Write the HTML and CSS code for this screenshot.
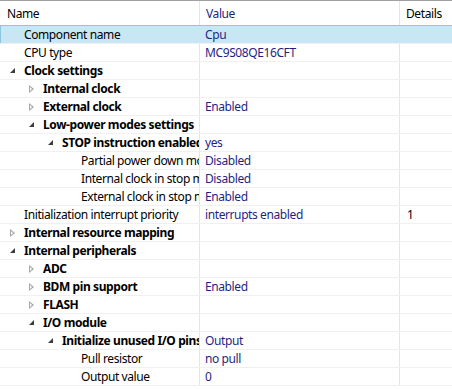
FILE: index.html
```html
<!DOCTYPE html>
<html lang="en">
<head>
    <meta charset="UTF-8">
    <title>Component Inspector</title>
    <link rel="stylesheet" href="styles.css">
</head>
<body>
    <div class="grid">
        <div class="row head">
            <div class="cell name">Name</div>
            <div class="cell value">Value</div>
            <div class="cell details">Details</div>
        </div>

        <div class="row selected">
            <div class="cell name l0"><span class="tog"></span><span class="txt">Component name</span></div>
            <div class="cell value">Cpu</div>
            <div class="cell details"></div>
        </div>
        <div class="row">
            <div class="cell name l0"><span class="tog"></span><span class="txt">CPU type</span></div>
            <div class="cell value">MC9S08QE16CFT</div>
            <div class="cell details"></div>
        </div>
        <div class="row">
            <div class="cell name l0 grp"><span class="tog open"></span><span class="txt">Clock settings</span></div>
            <div class="cell value"></div>
            <div class="cell details"></div>
        </div>
        <div class="row">
            <div class="cell name l1 grp"><span class="tog shut"></span><span class="txt">Internal clock</span></div>
            <div class="cell value"></div>
            <div class="cell details"></div>
        </div>
        <div class="row">
            <div class="cell name l1 grp"><span class="tog shut"></span><span class="txt">External clock</span></div>
            <div class="cell value">Enabled</div>
            <div class="cell details"></div>
        </div>
        <div class="row">
            <div class="cell name l1 grp"><span class="tog open"></span><span class="txt">Low-power modes settings</span></div>
            <div class="cell value"></div>
            <div class="cell details"></div>
        </div>
        <div class="row">
            <div class="cell name l2 grp"><span class="tog open"></span><span class="txt">STOP instruction enabled</span></div>
            <div class="cell value">yes</div>
            <div class="cell details"></div>
        </div>
        <div class="row">
            <div class="cell name l3"><span class="tog"></span><span class="txt">Partial power down mode</span></div>
            <div class="cell value">Disabled</div>
            <div class="cell details"></div>
        </div>
        <div class="row">
            <div class="cell name l3"><span class="tog"></span><span class="txt">Internal clock in stop mode</span></div>
            <div class="cell value">Disabled</div>
            <div class="cell details"></div>
        </div>
        <div class="row">
            <div class="cell name l3"><span class="tog"></span><span class="txt">External clock in stop mode</span></div>
            <div class="cell value">Enabled</div>
            <div class="cell details"></div>
        </div>
        <div class="row">
            <div class="cell name l0"><span class="tog"></span><span class="txt">Initialization interrupt priority</span></div>
            <div class="cell value">interrupts enabled</div>
            <div class="cell details">1</div>
        </div>
        <div class="row">
            <div class="cell name l0 grp"><span class="tog shut"></span><span class="txt">Internal resource mapping</span></div>
            <div class="cell value"></div>
            <div class="cell details"></div>
        </div>
        <div class="row">
            <div class="cell name l0 grp"><span class="tog open"></span><span class="txt">Internal peripherals</span></div>
            <div class="cell value"></div>
            <div class="cell details"></div>
        </div>
        <div class="row">
            <div class="cell name l1 grp"><span class="tog shut"></span><span class="txt">ADC</span></div>
            <div class="cell value"></div>
            <div class="cell details"></div>
        </div>
        <div class="row">
            <div class="cell name l1 grp"><span class="tog shut"></span><span class="txt">BDM pin support</span></div>
            <div class="cell value">Enabled</div>
            <div class="cell details"></div>
        </div>
        <div class="row">
            <div class="cell name l1 grp"><span class="tog shut"></span><span class="txt">FLASH</span></div>
            <div class="cell value"></div>
            <div class="cell details"></div>
        </div>
        <div class="row">
            <div class="cell name l1 grp"><span class="tog open"></span><span class="txt">I/O module</span></div>
            <div class="cell value"></div>
            <div class="cell details"></div>
        </div>
        <div class="row">
            <div class="cell name l2 grp"><span class="tog open"></span><span class="txt">Initialize unused I/O pins</span></div>
            <div class="cell value">Output</div>
            <div class="cell details"></div>
        </div>
        <div class="row">
            <div class="cell name l3"><span class="tog"></span><span class="txt">Pull resistor</span></div>
            <div class="cell value">no pull</div>
            <div class="cell details"></div>
        </div>
        <div class="row">
            <div class="cell name l3"><span class="tog"></span><span class="txt">Output value</span></div>
            <div class="cell value">0</div>
            <div class="cell details"></div>
        </div>
    </div>
</body>
</html>
```
FILE: styles.css
```css
body {
    margin: 0;
    background-color: #FFFFFF;
    font-family: "Segoe UI", "Noto Sans", Arial, sans-serif;
    font-size: 12px;
    letter-spacing: -0.4px;
    color: #000000;
}
.grid {
    width: 452px;
    border-top: 1px solid #A0A0A0;
}
.row {
    display: grid;
    grid-template-columns: 200px 200px 1fr;
    height: 18px;
    border-bottom: 1px solid #F0F0F0;
    box-sizing: border-box;
}
.row.head {
    height: 25px;
    border-bottom: 1px solid #E5E5E5;
}
.cell {
    display: flex;
    align-items: center;
    overflow: hidden;
    white-space: nowrap;
    border-right: 1px solid #E5E5E5;
    line-height: 17px;
}
.cell.details {
    border-right: none;
}
.head .cell {
    padding-left: 6px;
}
.head .name {
    padding-left: 7px;
}
.value {
    padding-left: 5px;
    color: #1F1F84;
}
.details {
    padding-left: 7px;
}
.name.l0 { padding-left: 0; }
.name.l1 { padding-left: 19px; }
.name.l2 { padding-left: 38px; }
.name.l3 { padding-left: 57px; }
.grp .txt {
    font-weight: bold;
    letter-spacing: -0.4px;
}
.tog {
    flex: none;
    width: 24px;
    height: 17px;
    position: relative;
}
.tog.shut::before {
    content: "";
    position: absolute;
    left: 10px;
    top: 5px;
    width: 0;
    height: 0;
    border-top: 4px solid transparent;
    border-bottom: 4px solid transparent;
    border-left: 5px solid #A6A6A6;
}
.tog.shut::after {
    content: "";
    position: absolute;
    left: 11px;
    top: 7px;
    width: 0;
    height: 0;
    border-top: 2px solid transparent;
    border-bottom: 2px solid transparent;
    border-left: 2px solid #FFFFFF;
}
.tog.open::before {
    content: "";
    position: absolute;
    left: 10px;
    top: 6px;
    width: 0;
    height: 0;
    border-left: 5px solid transparent;
    border-bottom: 5px solid #3C3C3C;
}
.row.selected {
    background-color: #C9E6F5;
    border-top: 1px solid #8FC5DE;
    margin-top: -1px;
    height: 19px;
    box-shadow: inset 1px 0 0 #8FC5DE;
}
.row.selected .cell {
    border-right-color: #C9E6F5;
}
```
